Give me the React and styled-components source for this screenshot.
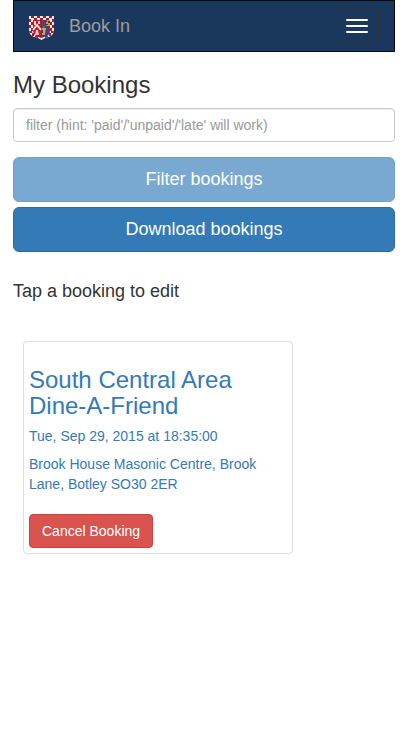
import React from "react";
import styled, { createGlobalStyle } from "styled-components";

const GlobalStyle = createGlobalStyle`
  *, *::before, *::after { box-sizing: border-box; }
  body {
    margin: 0;
    background: #fff;
    color: #333;
    font: 14px/20px "Liberation Sans", Arial, sans-serif;
  }
  button, input { font: inherit; }
`;

const Page = styled.div`
  padding: 0 13px;
`;

const Navbar = styled.nav`
  display: flex;
  align-items: center;
  height: 52px;
  padding: 0 15px;
  border: 1px solid #080808;
  background: #1a375e;
`;

const Brand = styled.a`
  display: flex;
  align-items: center;
  gap: 15px;
  color: #9d9d9d;
  font-size: 18px;
  text-decoration: none;
`;

const CrestIcon = styled.svg`
  width: 25px;
  height: 24px;
  margin-top: 4px;
`;

const MenuButton = styled.button`
  display: grid;
  gap: 4px;
  align-content: center;
  width: 44px;
  height: 34px;
  margin-left: auto;
  padding: 0 10px;
  border: 1px solid #333;
  border-radius: 4px;
  background: transparent;
`;

const MenuBar = styled.span`
  height: 2px;
  border-radius: 1px;
  background: #fff;
`;

const Title = styled.h1`
  margin: 20px 0 10px;
  font-size: 24px;
  font-weight: 400;
  line-height: 26px;
`;

const FilterForm = styled.form`
  display: grid;
`;

const FilterInput = styled.input`
  width: 100%;
  height: 34px;
  margin-bottom: 15px;
  padding: 6px 12px;
  border: 1px solid #ccc;
  border-radius: 4px;
  box-shadow: inset 0 1px 1px rgba(0, 0, 0, 0.075);
  color: #555;
  &::placeholder { color: #999; opacity: 1; }
`;

const Button = styled.button`
  padding: 6px 12px;
  border: 1px solid #d43f3a;
  border-radius: 4px;
  background: #d9534f;
  color: #fff;
  cursor: pointer;
`;

const WideButton = styled(Button)`
  width: 100%;
  height: 45px;
  margin-bottom: 5px;
  padding: 10px 16px 12px;
  border-color: #2e6da4;
  border-radius: 6px;
  background: #337ab7;
  font-size: 18px;
  &:disabled { opacity: 0.65; cursor: not-allowed; }
`;

const Hint = styled.h2`
  margin: 24px 0 40px;
  font-size: 18px;
  font-weight: 400;
  line-height: 20px;
`;

const Card = styled.article`
  max-width: 270px;
  margin: 0 10px;
  padding: 5px;
  border: 1px solid #ddd;
  border-radius: 4px;
`;

const BookingLink = styled.a`
  display: block;
  margin-bottom: 20px;
  color: #337ab7;
  text-decoration: none;
`;

const BookingTitle = styled.h3`
  margin: 20px 0 7px;
  font-size: 24px;
  font-weight: 400;
  line-height: 26px;
`;

const Detail = styled.p`
  margin: 0 0 8px;
  &:last-child { margin: 0; }
`;

function Crest() {
  return (
    <CrestIcon viewBox="0 0 25 24" aria-hidden="true">
      <clipPath id="shield">
        <path d="M0 0H25V14Q25 19 20 21L16 22L12.5 24L9 22L5 21Q0 19 0 14Z" />
      </clipPath>
      <g clipPath="url(#shield)">
        <path fill="#efe6e6" d="M0 0H25V24H0Z" />
        <path
          fill="#a81c2c"
          d="M2 0H5V2H2ZM8 0H11V2H8ZM14 0H17V2H14ZM20 0H23V2H20ZM5 2H8V4H5ZM11 2H14V4H11ZM17 2H20V4H17ZM0 3H2V6H0ZM2 6H4V9H2ZM0 9H2V12H0ZM2 12H4V15H2ZM0 15H3V17H0ZM3 17H5V20H3ZM23 3H25V6H23ZM21 6H23V9H21ZM23 9H25V12H23ZM21 12H23V15H21ZM22 15H25V17H22ZM20 17H22V20H20ZM6 20H9V22H6ZM16 20H19V22H16Z"
        />
        <path fill="#c21928" d="M4 4H12V22L7 20Q4 18 4 14Z" />
        <path fill="#3d3c91" d="M12 4H21V14Q21 18 18 20L12 22Z" />
        <path fill="#d2a323" d="M17 4H21V10H17Z" />
        <path fill="#35345f" d="M17 4H18V6H17ZM19 5H21V7H19ZM17 8H19V9H17Z" />
        <path fill="#7a416e" d="M13 4H14V10H13ZM15 6H16V9H15Z" />
        <path fill="none" stroke="#eee5e5" strokeWidth="2" d="M4 14L8 9L12 14" />
        <path fill="#e5ccce" d="M5 5H7V9H5ZM9 5H11V8H9ZM7 14H9L10 19H6Z" />
        <path fill="#c9ab31" d="M13 12H17V14H16V19H13V17H14V14H13Z" />
        <path fill="#2d8267" d="M14 10H16V12H14ZM16 14H17V17H16Z" />
        <path fill="#9d2848" d="M18 12H21V14L18 18Z" />
      </g>
    </CrestIcon>
  );
}

export default function App() {
  return (
    <>
      <GlobalStyle />
      <Page>
        <Navbar>
          <Brand href="#">
            <Crest />
            Book In
          </Brand>
          <MenuButton type="button" aria-label="Toggle navigation">
            <MenuBar />
            <MenuBar />
            <MenuBar />
          </MenuButton>
        </Navbar>
        <main>
          <Title>My Bookings</Title>
          <FilterForm>
            <FilterInput
              type="text"
              aria-label="Filter bookings"
              placeholder="filter (hint: 'paid'/'unpaid'/'late' will work)"
            />
            <WideButton type="submit" disabled>Filter bookings</WideButton>
            <WideButton type="button">Download bookings</WideButton>
          </FilterForm>
          <Hint>Tap a booking to edit</Hint>
          <Card>
            <BookingLink href="#">
              <BookingTitle>South Central Area Dine-A-Friend</BookingTitle>
              <Detail>Tue, Sep 29, 2015 at 18:35:00</Detail>
              <Detail>Brook House Masonic Centre, Brook Lane, Botley SO30 2ER</Detail>
            </BookingLink>
            <Button type="button">Cancel Booking</Button>
          </Card>
        </main>
      </Page>
    </>
  );
}
